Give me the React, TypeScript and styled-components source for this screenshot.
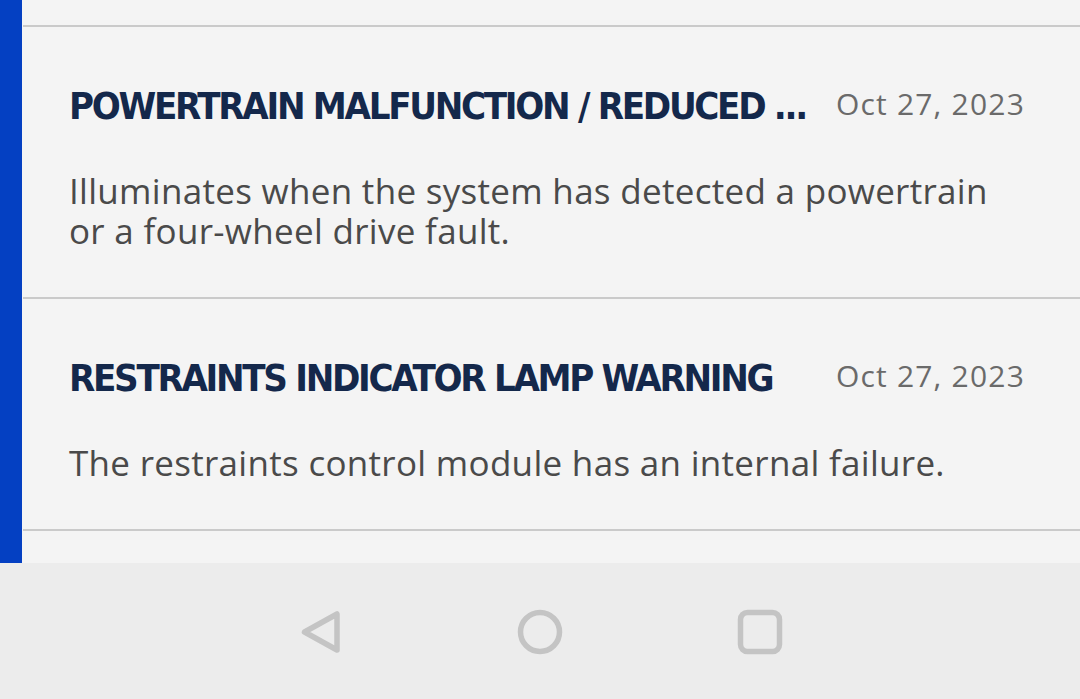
import React from "react";
import styled, { createGlobalStyle } from "styled-components";

const Global = createGlobalStyle`
  html, body { margin: 0; padding: 0; background: #ececec; }
  body { font-family: "Open Sans", "DejaVu Sans", sans-serif; }
`;

const Screen = styled.div`
  width: 1080px;
  height: 699px;
  display: flex;
  flex-direction: column;
  overflow: hidden;
`;

const Main = styled.div`
  height: 563px;
  display: flex;
  overflow: hidden;
`;

const Accent = styled.div`
  width: 22px;
  flex: none;
  background: #0440c2;
`;

const List = styled.div`
  flex: 1;
  background: #f4f4f4;
  display: flex;
  flex-direction: column;
  padding-left: 1px;
`;

const Stub = styled.div<{ h: number }>`
  height: ${(p) => p.h}px;
  flex: none;
`;

const Divider = styled.div`
  height: 2px;
  flex: none;
  background: #cacaca;
`;

const Row = styled.div`
  padding: 57px 55px 46px 46px;
  display: flex;
  flex-direction: column;
  gap: 43px;
`;

const Head = styled.div`
  display: flex;
  align-items: flex-start;
  gap: 26px;
  height: 44px;
`;

const Title = styled.div`
  flex: 1;
  min-width: 0;
  font-family: "DejaVu Sans Condensed", "DejaVu Sans", sans-serif;
  font-stretch: condensed;
  font-weight: 700;
  font-size: 38px;
  line-height: 44px;
  letter-spacing: -2.3px;
  color: #14284b;
  white-space: nowrap;
  overflow: hidden;
  text-overflow: ellipsis;
`;

const DateText = styled.div`
  flex: none;
  font-family: "Open Sans", sans-serif;
  font-size: 30px;
  line-height: 39px;
  letter-spacing: 1.2px;
  color: #6a6a6a;
`;

const Desc = styled.div`
  font-family: "Open Sans", sans-serif;
  font-size: 35px;
  line-height: 40px;
  letter-spacing: 0.3px;
  color: #4a4a4a;
  max-width: 935px;
`;

const NavBar = styled.div`
  flex: 1;
  background: #ececec;
  display: flex;
  align-items: center;
  justify-content: center;
  gap: 174px;
  padding-top: 2px;
`;

const NavIcon = styled.svg`
  width: 46px;
  height: 46px;
  display: block;
`;

const items = [
  {
    title: "POWERTRAIN MALFUNCTION / REDUCED ...",
    date: "Oct 27, 2023",
    desc: "Illuminates when the system has detected a powertrain or a four-wheel drive fault.",
  },
  {
    title: "RESTRAINTS INDICATOR LAMP WARNING",
    date: "Oct 27, 2023",
    desc: "The restraints control module has an internal failure.",
  },
];

export default function App() {
  return (
    <Screen>
      <Global />
      <Main>
        <Accent />
        <List>
          <Stub h={25} />
          <Divider />
          {items.map((it) => (
            <React.Fragment key={it.title}>
              <Row>
                <Head>
                  <Title>{it.title}</Title>
                  <DateText>{it.date}</DateText>
                </Head>
                <Desc>{it.desc}</Desc>
              </Row>
              <Divider />
            </React.Fragment>
          ))}
          <Stub h={40} />
        </List>
      </Main>
      <NavBar>
        <NavIcon viewBox="0 0 46 46">
          <path
            d="M40 5 L40 41 L7.5 23 Z"
            fill="none"
            stroke="#c4c4c4"
            strokeWidth="5.5"
            strokeLinejoin="round"
          />
        </NavIcon>
        <NavIcon viewBox="0 0 46 46">
          <circle cx="23" cy="23" r="19.5" fill="none" stroke="#c4c4c4" strokeWidth="5.5" />
        </NavIcon>
        <NavIcon viewBox="0 0 46 46">
          <rect x="3.5" y="3.5" width="39" height="39" rx="7" fill="none" stroke="#c4c4c4" strokeWidth="5.5" />
        </NavIcon>
      </NavBar>
    </Screen>
  );
}
